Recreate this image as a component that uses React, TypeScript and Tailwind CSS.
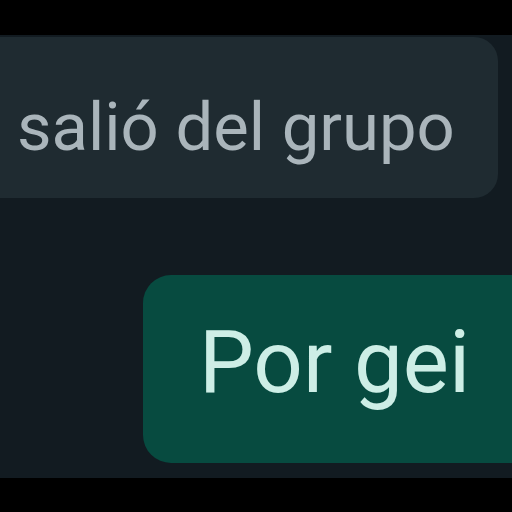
export default function App() {
  return (
    <div className="w-[512px] h-[512px] overflow-hidden flex flex-col bg-black" style={{ fontFamily: 'Roboto, "Liberation Sans", sans-serif' }}>
      <div className="h-[35px] shrink-0 bg-black" />
      <div className="flex-1 bg-[#121b21] pt-[2px] overflow-hidden">
        {/* incoming bubble */}
        <div className="-ml-[24px] w-[522px] h-[161px] rounded-[24px] bg-[#1f2b31] flex items-start pl-[41px] pt-[57px]">
          <span className="text-[67px] leading-none text-[#aab5bb] whitespace-nowrap">salió del grupo</span>
        </div>

        {/* outgoing bubble */}
        <div className="mt-[77px] ml-[143px] w-[420px] h-[188px] rounded-[28px] bg-[#074b40] flex items-start pl-[56px] pt-[44px]">
          <span className="text-[87px] leading-none text-[#cdeee6] whitespace-nowrap">Por gei</span>
        </div>
      </div>
      <div className="h-[34px] shrink-0 bg-black" />
    </div>
  );
}
